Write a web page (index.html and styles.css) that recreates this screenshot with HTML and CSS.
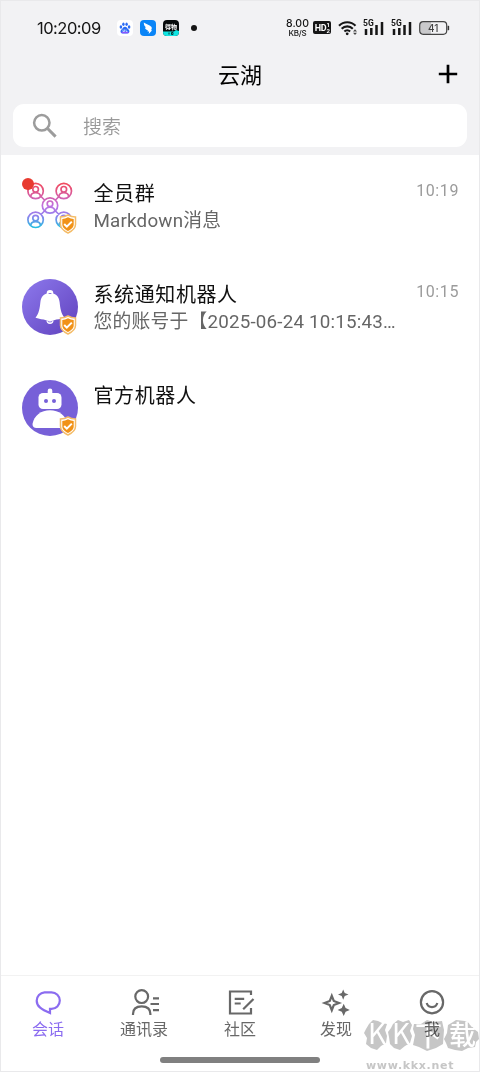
FILE: index.html
```html
<!DOCTYPE html>
<html lang="zh-CN">
<head>
<meta charset="utf-8">
<title>云湖</title>
<link rel="stylesheet" href="styles.css">
</head>
<body>
<div class="app">
  <header class="header">
    <div class="status">
      <span class="clock">10:20:09</span>
      <div class="notices">
        <svg width="16" height="16" viewBox="0 0 16 16"><rect width="16" height="16" rx="4" fill="#fff"/><g fill="#2b6cf5"><ellipse cx="3.900" cy="7" rx="1.300" ry="1.700"/><ellipse cx="6.400" cy="4.200" rx="1.200" ry="1.700"/><ellipse cx="9.600" cy="4.200" rx="1.200" ry="1.700"/><ellipse cx="12.100" cy="7" rx="1.300" ry="1.700"/><path d="M8 6.700c1.600 0 2.100 1.400 3.300 2.500 2 1.700 1.200 4.200-.9 4.200H5.600c-2.100 0-2.900-2.500-.9-4.200C5.900 8.100 6.400 6.700 8 6.700z"/></g><path d="M4.500 12.500h7" stroke="#8c52ff" stroke-width="1.500"/><path d="M6 9.500v2h1.500v-2M9 9.500v2h1.500" fill="none" stroke="#dfe8ff" stroke-width=".7"/></svg>
        <svg width="16" height="16" viewBox="0 0 16 16"><rect width="16" height="16" rx="4" fill="#0a85f7"/><path d="M3.800 2.500c2 1.700 5.700 2 7.500 4.300 1 1.300.3 2.500-.3 3.500h1.200L8.700 14l.4-2.500H7.500l.3-1.300C5.800 9.400 5 8.200 4.900 7.400l1.300.2C4.500 6.400 3.800 4.600 3.800 2.500z" fill="#fff"/></svg>
        <svg width="16" height="16" viewBox="0 0 16 16"><rect width="16" height="16" rx="4" fill="#080b0c"/><path d="M0 11.500h11l2-1.500 3 1v1a4 4 0 0 1-4 4H4a4 4 0 0 1-4-4z" fill="#10e5e2"/><text x="8" y="8.500" class="app-word">得物</text><path d="M6 12.500v2M8.500 12.500h1.500v2H8.500z" stroke="#063a3a" fill="none"/></svg>
        <i class="more-dot"></i>
      </div>
      <div class="signals">
        <div class="speed"><span>8.00</span><span class="unit">KB/S</span></div>
        <svg class="hd" width="18" height="13" viewBox="0 0 18 13"><rect width="18" height="13" rx="2" fill="#161616"/><text x="1.800" y="10" class="hd-word">HD</text><text x="13.400" y="6.300" class="hd-num">1</text><text x="13.400" y="11.500" class="hd-num">2</text></svg>
        <svg class="wifi" width="20" height="16" viewBox="0 0 20 16"><g fill="none" stroke="#161616" stroke-width="2.100"><path d="M1 5.700a11.500 11.500 0 0 1 16.500 0"/><path d="M3.700 8.700a7.700 7.700 0 0 1 11.100 0"/><path d="M6.400 11.500a4 4 0 0 1 5.700 0"/></g><circle cx="9.200" cy="13.800" r="1.400" fill="#161616"/><path d="M15 11.400l2-2.200 2 2.200zM15 12.800l2 2.200 2-2.200z" fill="#444"/></svg>
        <svg class="cell" width="22" height="17" viewBox="0 0 22 17"><text x="0" y="6.700" class="net">5G</text><path d="M3 10v6M8.300 9v7M13.500 6v10M19 3v13" stroke="#161616" stroke-width="2.500"/></svg>
        <svg class="cell2" width="22" height="17" viewBox="0 0 22 17"><text x="0" y="6.700" class="net">5G</text><path d="M3 10v6M8.300 9v7M13.500 6v10M19 3v13" stroke="#161616" stroke-width="2.500"/></svg>
        <svg class="battery" width="31" height="14" viewBox="0 0 31 14"><path d="M4.500 1H12v12H4.500A3.500 3.500 0 0 1 1 9.500v-5A3.500 3.500 0 0 1 4.500 1z" fill="#c9c9cb"/><rect x=".7" y=".7" width="27" height="12.600" rx="3.500" fill="none" stroke="#444" stroke-width="1.200"/><path d="M29.400 4.800v4.400" stroke="#333" stroke-width="1.500"/><text x="14.300" y="10.700" class="charge">41</text></svg>
      </div>
    </div>
    <div class="titlebar">
      <h1 class="title">云湖</h1>
      <svg class="plus" width="20" height="20" viewBox="0 0 20 20"><path d="M10 .8v18.400M.8 10h18.400" stroke="#000" stroke-width="2.700"/></svg>
    </div>
    <div class="search">
      <svg width="26" height="26" viewBox="0 0 26 26" fill="none" stroke="#9c9c9c"><circle cx="9.800" cy="9.800" r="7.700" stroke-width="2.500"/><path d="M15.300 15.300l8.300 8.300" stroke-width="3"/></svg>
      <span>搜索</span>
    </div>
  </header>

  <main class="chats">
    <article class="chat">
      <div class="avatar">
        <svg width="56" height="56" viewBox="0 0 56 56">
          <defs>
            <linearGradient id="net" gradientUnits="userSpaceOnUse" x1="0" y1="5" x2="0" y2="51"><stop stop-color="#f34b5c"/><stop offset=".25" stop-color="#d95a9b"/><stop offset=".5" stop-color="#c071e2"/><stop offset=".72" stop-color="#8e82ed"/><stop offset="1" stop-color="#16c5df"/></linearGradient>
          </defs>
          <g fill="none" stroke="url(#net)" stroke-width="1.700">
            <path d="M21.300 13a7.700 7.700 0 1 1-15.400 0a7.700 7.700 0 1 1 15.400 0M49.500 13a7.700 7.700 0 1 1-15.400 0a7.700 7.700 0 1 1 15.400 0M35.700 27.500a7.700 7.700 0 1 1-15.400 0a7.700 7.700 0 1 1 15.400 0M21.300 41.800a7.700 7.700 0 1 1-15.400 0a7.700 7.700 0 1 1 15.400 0M49.500 41.800a7.700 7.700 0 1 1-15.400 0a7.700 7.700 0 1 1 15.400 0M19 18.500l3.500 3.500M33.500 22l3.500-3.500M22.500 33l-3.500 3.500M33.500 33l3.500 3.500"/>
            <path d="M16.400 11.300a2.800 2.800 0 1 1-5.600 0a2.800 2.800 0 1 1 5.600 0M44.600 11.300a2.800 2.800 0 1 1-5.600 0a2.800 2.800 0 1 1 5.600 0M30.800 25.800a2.800 2.800 0 1 1-5.600 0a2.800 2.800 0 1 1 5.600 0M16.400 40.100a2.800 2.800 0 1 1-5.600 0a2.800 2.800 0 1 1 5.600 0M44.600 40.100a2.800 2.800 0 1 1-5.600 0a2.800 2.800 0 1 1 5.600 0M8.800 18.500c0-5 9.600-5 9.600 0M37 18.500c0-5 9.600-5 9.600 0M23.200 33c0-5 9.600-5 9.600 0M8.800 47.300c0-5 9.600-5 9.600 0M37 47.300c0-5 9.600-5 9.600 0"/>
          </g>
        </svg>
        <i class="unread"></i>
        <svg class="shield" width="18" height="20" viewBox="0 0 18 20"><path d="M9 1c2.500 1.500 4.800 2 7.500 2v7.500c0 4-3.500 6.500-7.500 8.500-4-2-7.500-4.500-7.500-8.500V3C4.200 3 6.500 2.500 9 1z" fill="#fff" stroke="#f4bc68" stroke-width="1.500"/><path d="M9 3.300c2 1 3.900 1.500 5.700 1.600v5.600c0 3-2.700 4.900-5.700 6.500-3-1.600-5.700-3.500-5.700-6.500V4.900C5.100 4.800 7 4.300 9 3.300z" fill="#f19217"/><path d="M5.200 10l2.600 2.600 5-5" fill="none" stroke="#fff" stroke-width="2"/></svg>
      </div>
      <div class="copy"><h2>全员群</h2><p>Markdown消息</p></div>
      <time>10:19</time>
    </article>
    <article class="chat">
      <div class="avatar">
        <svg width="56" height="56" viewBox="0 0 56 56"><defs><linearGradient id="bell" x1="0" y1="0" x2="1" y2="1"><stop stop-color="#8d79ed"/><stop offset="1" stop-color="#6041bd"/></linearGradient></defs><circle cx="28" cy="28" r="28" fill="url(#bell)"/><circle cx="28" cy="14.200" r="3.300" fill="#fff"/><path d="M24.500 41.500a3.500 3.500 0 0 0 7 0z" fill="#fff"/><path d="M28 14.300c-6 0-8.900 3.200-9.600 8.700-.7 6-1.300 11.500-4.900 15.700 4 1.500 7.500 1.300 10.500 2.600 2.600 1.100 5.400 1.100 8 0 3-1.300 6.500-1.100 10.500-2.600-3.600-4.200-4.200-9.700-4.900-15.700-.7-5.500-3.600-8.700-9.600-8.700z" fill="#fff"/><path d="M26.600 14.500h2.800M25.800 42.500q2.200 1 4.400 0" stroke="#8069d9" stroke-width=".9" fill="none"/></svg>
        <svg class="shield" width="18" height="20" viewBox="0 0 18 20"><path d="M9 1c2.500 1.500 4.800 2 7.500 2v7.500c0 4-3.500 6.500-7.500 8.500-4-2-7.500-4.500-7.500-8.500V3C4.200 3 6.500 2.500 9 1z" fill="#fff" stroke="#f4bc68" stroke-width="1.500"/><path d="M9 3.300c2 1 3.900 1.500 5.700 1.600v5.600c0 3-2.700 4.900-5.700 6.500-3-1.600-5.700-3.500-5.700-6.500V4.900C5.100 4.800 7 4.300 9 3.300z" fill="#f19217"/><path d="M5.200 10l2.600 2.600 5-5" fill="none" stroke="#fff" stroke-width="2"/></svg>
      </div>
      <div class="copy"><h2>系统通知机器人</h2><p>您的账号于【2025-06-24 10:15:43…</p></div>
      <time>10:15</time>
    </article>
    <article class="chat">
      <div class="avatar">
        <svg width="56" height="56" viewBox="0 0 56 56"><circle cx="28" cy="28" r="28" fill="#7760d8"/><g fill="#fff"><rect x="25.700" y="8.500" width="4.600" height="7" rx="2.300"/><rect x="16.500" y="13" width="23" height="16" rx="4.500"/><path d="M10.500 44C12 35.500 19 30.300 28 30.300s16 5.200 17.500 13.700q0 4-4 4h-27q-4 0-4-4z"/></g><circle cx="24" cy="21" r="2" fill="#7760d8"/><circle cx="32" cy="21" r="2" fill="#7760d8"/></svg>
        <svg class="shield" width="18" height="20" viewBox="0 0 18 20"><path d="M9 1c2.500 1.500 4.800 2 7.500 2v7.500c0 4-3.500 6.500-7.500 8.500-4-2-7.500-4.500-7.500-8.500V3C4.200 3 6.500 2.500 9 1z" fill="#fff" stroke="#f4bc68" stroke-width="1.500"/><path d="M9 3.300c2 1 3.900 1.500 5.700 1.600v5.600c0 3-2.700 4.900-5.700 6.500-3-1.600-5.700-3.500-5.700-6.500V4.900C5.100 4.800 7 4.300 9 3.300z" fill="#f19217"/><path d="M5.200 10l2.600 2.600 5-5" fill="none" stroke="#fff" stroke-width="2"/></svg>
      </div>
      <div class="copy"><h2>官方机器人</h2></div>
    </article>
  </main>

  <nav class="tabs">
    <a class="tab active"><svg viewBox="0 0 30 30"><path d="M17 25.700v-2.800h1.500a8.300 8.300 0 0 0 0-16.600H11.500A8.400 8.400 0 0 0 3.700 14.700C3.700 20.500 8.500 23.500 17 27z"/></svg><span>会话</span></a>
    <a class="tab"><svg viewBox="0 0 30 30"><circle cx="12.700" cy="10.600" r="6.400"/><path d="M4 29v-1c0-5.300 3.800-7.700 8.700-7.700s8.700 2.400 8.700 7.700v1M24 12.300h6M21.500 18H30M24 24.200h6"/></svg><span>通讯录</span></a>
    <a class="tab"><svg viewBox="0 0 30 30"><path d="M26 9V5.500H5v22h21v-5.500M9.700 12.800h9.500M9.700 17.500h6M18.200 23.200L28.500 13"/></svg><span>社区</span></a>
    <a class="tab"><svg viewBox="0 0 30 30"><path d="M10.800 9.800l2 5.200 5.200 2-5.200 2-2 5.200-2-5.200-5.200-2 5.200-2z"/><path class="solid" d="M22.200 3.500l1.500 3.500 3.800 1.500-3.800 1.500-1.500 3.700-1.500-3.700-3.700-1.500 3.700-1.500zM22.700 17.800l1.900 4.200 4.200 1.900-4.200 1.900-1.900 4.200-1.900-4.200-4.200-1.900 4.200-1.900z"/></svg><span>发现</span></a>
    <a class="tab"><svg viewBox="0 0 30 30"><circle cx="15" cy="16.200" r="11.100"/><path d="M9.700 17a5.500 5.500 0 0 0 10.600 0"/></svg><span>我</span></a>
  </nav>
  <div class="gesture"></div>

  <div class="watermark">
    <svg width="116" height="34" viewBox="0 0 116 34"><g fill="#c6c6c6"><path d="M5 5l4-4 5 1 4 2 5 1-2 6 2 6-1 7-5 3-4 4-6-2-5-4 1-6-3-5 2-4z"/><path d="M29 5l5-4 5 2 6-2 3 5-2 6 2 5-2 7-5 3-5 4-6-2-4-4-1-7-1-5 3-4z"/><path d="M50 5l7 0 6-4 6 2 9-1 2 9-1 14-7 4-9 3-8-4-6-2 2-10-2-6z"/><path d="M84 6l5-3 3-2 9 1 6 3 3 5 4 3 1 7-3 3-1 5-7 1-6 3-7-1-7-2-2-5-2-4 3-6z"/></g><g class="mark-word"><text x="4" y="25" class="latin">K</text><text x="28" y="25" class="latin">K</text><text x="51" y="27">下</text><text x="85" y="26">载</text></g></svg>
    <span>www.kkx.net</span>
  </div>
</div>
</body>
</html>
```
FILE: styles.css
```css
* { box-sizing: border-box; }
body {
  margin: 0;
  background: #fff;
  font-family: Roboto, "Noto Sans CJK SC", sans-serif;
}
h1, h2, p { margin: 0; font-weight: 400; }
svg { display: block; flex: none; overflow: visible; }
.app {
  position: relative;
  display: flex;
  flex-direction: column;
  height: 1072px;
  border: 1px solid #e9e9eb;
  overflow: hidden;
}
.header { height: 154px; background: #f2f2f4; flex: none; }
.status { display: flex; height: 47px; padding: 6px 29px 0 36px; align-items: center; }
.clock { width: 80px; font: 400 16.500px/20px Inter, sans-serif; letter-spacing: -.5px; color: #151515; white-space: nowrap; }
.notices { display: flex; align-items: center; gap: 7px; }
.more-dot { width: 6px; height: 6px; margin-left: 5px; border-radius: 50%; background: #151515; }
.signals { display: flex; align-items: center; margin-left: auto; }
.speed { display: flex; flex-direction: column; align-items: center; width: 23px; margin-right: 5px; padding-top: 1px; font: 500 10.500px/10px Inter, sans-serif; color: #151515; }
.unit { font-size: 8px; line-height: 8px; letter-spacing: -.2px; }
.hd { margin-left: -1px; }
.wifi { margin-left: 7px; }
.cell { margin-left: 5px; }
.cell2 { margin-left: 6px; }
.battery { margin-left: 6px; }
.app-word { font: 700 6px "Noto Sans CJK SC", sans-serif; fill: #fff; text-anchor: middle; }
.hd-word { font: 700 9px Roboto, sans-serif; fill: #fff; letter-spacing: -.4px; }
.hd-num { font: 700 6px Roboto, sans-serif; fill: #fff; }
.net { font: 700 8.500px Roboto, sans-serif; fill: #161616; }
.charge { font: 500 10px Inter, sans-serif; fill: #444; text-anchor: middle; }
.titlebar { display: grid; grid-template-columns: 1fr auto 1fr; align-items: center; height: 56px; padding: 0 21px; }
.title { grid-column: 2; font-size: 22px; line-height: 32px; color: #000; }
.plus { justify-self: end; margin-top: -4px; }
.search { display: flex; align-items: center; gap: 25px; height: 43px; margin: 0 12px; padding-left: 19px; border-radius: 11px; background: #fff; color: #999; font-size: 19px; font-weight: 350; }
.chats { flex: 1; padding-top: 1px; }
.chat { display: flex; height: 101px; padding: 22px 20px 0 20.500px; }
.avatar { position: relative; width: 56px; height: 56px; margin-right: 16px; }
.shield { position: absolute; right: 1px; bottom: 0; }
.unread { position: absolute; left: 0; top: 0; width: 12px; height: 12px; border-radius: 50%; background: #e83b30; }
.copy { flex: 1; padding-top: 2px; white-space: nowrap; }
.copy h2 { font-size: 20px; line-height: 29px; letter-spacing: .6px; color: #101010; }
.copy p { margin-top: -1px; font-size: 18.800px; line-height: 26px; letter-spacing: .2px; color: #666; }
.chat time { padding-top: 3px; font-size: 16px; line-height: 19px; letter-spacing: .6px; color: #9b9b9b; }
.tabs { display: flex; height: 65px; margin: 0 -1px; border-top: 1px solid #f2f2f2; }
.tab { flex: 1; display: flex; flex-direction: column; align-items: center; padding-top: 10px; color: #686868; }
.tab svg { width: 30px; height: 30px; fill: none; stroke: currentColor; stroke-width: 2.200; }
.tab .solid { fill: currentColor; stroke: none; }
.tab span { margin-top: 2px; font-size: 16px; line-height: 24px; }
.tab.active { color: #8b6cf0; }
.gesture { width: 160px; height: 6px; margin: 17px auto 8px; border-radius: 3px; background: #808080; flex: none; }
.watermark { position: absolute; left: 363px; bottom: -3px; width: 116px; mix-blend-mode: multiply; }
.watermark svg { margin-top: -2px; }
.watermark span { display: block; margin: 5px 0 0 2px; font: 700 11px/16px "DejaVu Sans", sans-serif; letter-spacing: .7px; color: #c6c6c6; }
.mark-word { font: 500 27px "Noto Sans CJK SC", sans-serif; fill: #fff; }
.mark-word .latin { font: 400 28px "Noto Sans CJK SC", sans-serif; }
```
